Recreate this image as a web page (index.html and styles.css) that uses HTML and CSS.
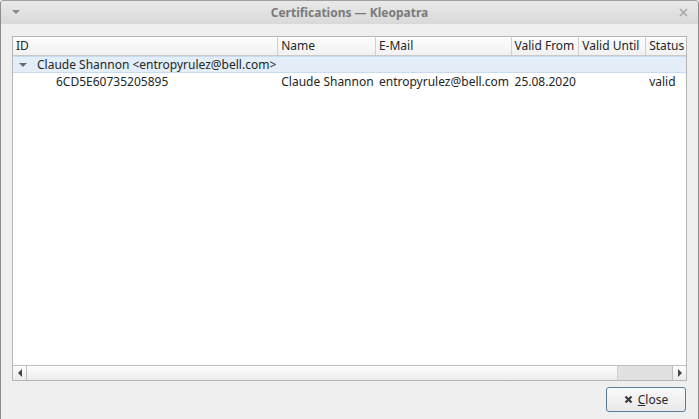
FILE: index.html
```html
<!DOCTYPE html>
<html>
<head>
<meta charset="utf-8">
<link rel="stylesheet" href="styles.css">
</head>
<body>
<div class="window">
  <div class="titlebar">
    <span class="menu-arrow"></span>
    <span class="title">Certifications — Kleopatra</span>
    <svg class="close-x" width="9" height="9" viewBox="0 0 9 9"><path d="M1 1L8 8M8 1L1 8" stroke="#a8a8a8" stroke-width="1.6"/></svg>
  </div>
  <div class="content">
    <div class="tree">
      <div class="header">
        <div class="hcell c-id">ID</div>
        <div class="hcell c-name">Name</div>
        <div class="hcell c-mail">E-Mail</div>
        <div class="hcell c-from">Valid From</div>
        <div class="hcell c-until">Valid Until</div>
        <div class="hcell c-status">Status</div>
      </div>
      <div class="body">
        <div class="row group">
          <span class="expander"></span>
          <span>Claude Shannon &lt;entropyrulez@bell.com&gt;</span>
        </div>
        <div class="row item">
          <div class="cell c-id child">6CD5E60735205895</div>
          <div class="cell c-name">Claude Shannon</div>
          <div class="cell c-mail">entropyrulez@bell.com</div>
          <div class="cell c-from">25.08.2020</div>
          <div class="cell c-until"></div>
          <div class="cell c-status">valid</div>
        </div>
      </div>
      <div class="hscroll">
        <div class="sbtn left"><span class="tri-l"></span></div>
        <div class="track"><div class="handle"></div></div>
        <div class="sbtn right"><span class="tri-r"></span></div>
      </div>
    </div>
    <div class="buttons">
      <button class="btn"><svg width="9" height="9" viewBox="0 0 9 9"><path d="M1.5 1.5L7.5 7.5M7.5 1.5L1.5 7.5" stroke="#3a3a3a" stroke-width="2.2"/></svg><span><u>C</u>lose</span></button>
    </div>
  </div>
</div>
</body>
</html>
```
FILE: styles.css
```css
html, body {
  margin: 0;
  padding: 0;
  background: #efefef;
}
body {
  font-family: "Noto Sans", "Open Sans", sans-serif;
  font-size: 12px;
  color: #232627;
}
.window {
  width: 699px;
  height: 419px;
  box-sizing: border-box;
  border-left: 1px solid #8c8c8c;
  border-right: 1px solid #8c8c8c;
  border-top: 1px solid #a0a0a0;
  border-radius: 4px 4px 0 0;
  background: #efefef;
  display: flex;
  flex-direction: column;
  overflow: hidden;
}
.titlebar {
  height: 23px;
  flex: none;
  background: linear-gradient(#e9e9e9, #d9d9d9);
  display: flex;
  align-items: center;
  position: relative;
  justify-content: center;
}
.menu-arrow {
  position: absolute;
  left: 11px;
  top: 9px;
  width: 0;
  height: 0;
  border-left: 4px solid transparent;
  border-right: 4px solid transparent;
  border-top: 4px solid #8a8a8a;
}
.title {
  font-weight: bold;
  font-size: 12px;
  color: #7a7a7a;
}
.close-x {
  position: absolute;
  right: 10px;
  top: 7px;
}
.content {
  flex: 1;
  display: flex;
  flex-direction: column;
  padding: 12px 11px 0 11px;
}
.tree {
  height: 343px;
  border: 1px solid #b5b5b5;
  background: #fff;
  display: flex;
  flex-direction: column;
}
.header {
  display: flex;
  height: 18px;
  background: linear-gradient(#fdfdfd, #f1f1f1);
  border-bottom: 1px solid #c9c9c9;
}
.hcell {
  box-sizing: border-box;
  padding-left: 3px;
  line-height: 18px;
  border-right: 1px solid #d0d0d0;
  white-space: nowrap;
  overflow: hidden;
}
.c-id { width: 266px; }
.c-name { width: 98px; }
.c-mail { width: 136px; }
.c-from { width: 68px; }
.c-until { width: 67px; }
.c-status { width: 40px; border-right: none; }
.body {
  flex: 1;
}
.row {
  height: 17px;
  display: flex;
  align-items: center;
  white-space: nowrap;
}
.group {
  background: #e3eef8;
  border-top: 1px solid #c8dcef;
  border-bottom: 1px solid #c8dcef;
  height: 15px;
  padding-left: 6px;
}
.expander {
  width: 0;
  height: 0;
  border-left: 4px solid transparent;
  border-right: 4px solid transparent;
  border-top: 4px solid #6a6a6a;
  margin-right: 10px;
}
.cell {
  box-sizing: border-box;
  padding-left: 3px;
  overflow: hidden;
}
.cell.child { padding-left: 43px; }
.hscroll {
  height: 14px;
  display: flex;
  border-top: 1px solid #c0c0c0;
  background: linear-gradient(#fdfdfd, #ececec);
}
.sbtn {
  width: 13px;
  display: flex;
  align-items: center;
  justify-content: center;
}
.sbtn.left { border-right: 1px solid #c0c0c0; }
.sbtn.right { border-left: 1px solid #c0c0c0; }
.tri-l {
  width: 0; height: 0;
  border-top: 4px solid transparent;
  border-bottom: 4px solid transparent;
  border-right: 4px solid #444;
}
.tri-r {
  width: 0; height: 0;
  border-top: 4px solid transparent;
  border-bottom: 4px solid transparent;
  border-left: 4px solid #444;
}
.track {
  flex: 1;
  display: flex;
  justify-content: flex-end;
}
.handle {
  width: 54px;
  background: #e1e1e1;
  border-left: 1px solid #cfcfcf;
}
.buttons {
  display: flex;
  justify-content: flex-end;
  padding-top: 6px;
}
.btn {
  width: 80px;
  height: 25px;
  box-sizing: border-box;
  border: 1px solid #5b7c99;
  border-radius: 3px;
  background: linear-gradient(#f9f9f9, #e9e9e9);
  font-family: inherit;
  font-size: 12px;
  color: #232627;
  display: flex;
  align-items: center;
  justify-content: center;
  gap: 5px;
  padding: 0;
  margin-right: 1px;
}
```
